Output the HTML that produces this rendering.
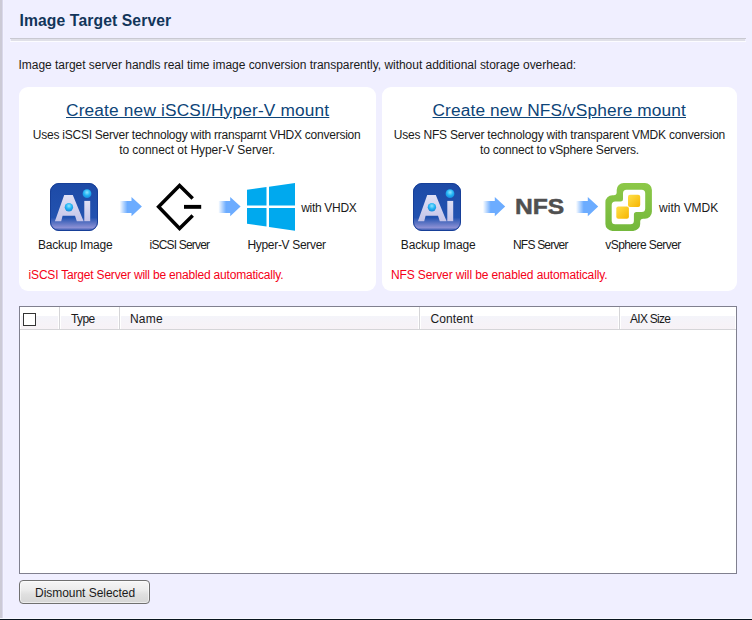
<!DOCTYPE html>
<html><head><meta charset="utf-8">
<style>
html,body{margin:0;padding:0;}
body{width:752px;height:620px;position:relative;overflow:hidden;background:#f0efff;font-family:"Liberation Sans",sans-serif;color:#1a1a1a;}
.a{position:absolute;white-space:nowrap;line-height:1;}
.t12{font-size:12px;}
#lstrip{position:absolute;left:0;top:0;width:2px;height:619px;background:#cccad6;}
#lstrip2{position:absolute;left:2px;top:0;width:1px;height:619px;background:#d9d7ea;}
#lstrip3{position:absolute;left:3px;top:0;width:1px;height:619px;background:#f3f2ff;}
#bline{position:absolute;left:0;top:619px;width:752px;height:1px;background:#08141f;}
#bline2{position:absolute;left:0;top:618px;width:752px;height:1px;background:#f8f8fe;}
#sep1{position:absolute;left:10px;top:38px;width:736px;height:1px;background:#c9c9d2;}
#sep2{position:absolute;left:11px;top:39px;width:734px;height:2px;background:#e0e0e8;}
#sep3{position:absolute;left:10px;top:41px;width:736px;height:1px;background:#fcfcff;}
.card{position:absolute;top:87px;height:204px;background:#fff;border-radius:9px;}
.link{font-size:17.3px;color:#0d4478;text-decoration:underline;}
.red{color:#f50018;}
.tbl{position:absolute;left:19px;top:306px;width:716px;height:266px;border:1px solid #80808f;background:#fff;}
.hdr{position:absolute;left:0;top:0;width:716px;height:22px;border-bottom:1px solid #d5d5d8;}
.cell{position:absolute;top:0;height:22px;}
.cell .g{position:absolute;left:1px;right:1px;top:9px;bottom:0;background:linear-gradient(#f4f4fa,#f7f2f6);}
.vs{position:absolute;top:0;width:1px;height:22px;background:#d5d5d8;}
.btn{position:absolute;left:19px;top:580px;width:129px;height:22px;border:1px solid #707070;border-radius:4px;background:linear-gradient(#f6f6f6 0%,#ececec 40%,#e0e0e0 60%,#d6d6d6 100%);box-shadow:inset 0 0 0 1px rgba(255,255,255,.55);}
</style></head><body>
<div id="lstrip"></div><div id="lstrip2"></div><div id="lstrip3"></div>
<div id="bline2"></div><div id="bline"></div>

<div class="a" style="left:19.5px;top:13.3px;font-size:15.7px;font-weight:bold;color:#12355a;letter-spacing:0.11px;">Image Target Server</div>
<div id="sep1"></div><div id="sep2"></div><div id="sep3"></div>

<div class="a t12" style="left:18.5px;top:59px;letter-spacing:-0.03px;">Image target server handls real time image conversion transparently, without additional storage overhead:</div>

<div class="card" style="left:19px;width:357px;"></div>
<div class="card" style="left:382px;width:355px;"></div>

<!-- left card -->
<div class="a link" style="left:66px;top:101.5px;letter-spacing:0.165px;">Create new iSCSI/Hyper-V mount</div>
<div class="a t12" style="left:32.8px;top:129px;letter-spacing:-0.241px;">Uses iSCSI Server technology with rransparnt VHDX conversion</div>
<div class="a t12" style="left:119.2px;top:144px;letter-spacing:-0.057px;">to connect ot Hyper-V Server.</div>
<div class="a t12" style="left:38px;top:239px;letter-spacing:-0.191px;">Backup Image</div>
<div class="a t12" style="left:149.6px;top:239px;letter-spacing:-0.809px;">iSCSI Server</div>
<div class="a t12" style="left:247.5px;top:239px;letter-spacing:-0.323px;">Hyper-V Server</div>
<div class="a t12" style="left:301.2px;top:202px;letter-spacing:-0.3px;">with VHDX</div>
<div class="a t12 red" style="left:28.6px;top:269px;letter-spacing:-0.192px;">iSCSI Target Server will be enabled automatically.</div>

<!-- right card -->
<div class="a link" style="left:432.5px;top:101.5px;letter-spacing:0.135px;">Create new NFS/vSphere mount</div>
<div class="a t12" style="left:393.8px;top:129px;letter-spacing:-0.195px;">Uses NFS Server technology with transparent VMDK conversion</div>
<div class="a t12" style="left:480px;top:144px;letter-spacing:-0.193px;">to connect to vSphere Servers.</div>
<div class="a t12" style="left:400.8px;top:239px;letter-spacing:-0.173px;">Backup Image</div>
<div class="a t12" style="left:513px;top:239px;letter-spacing:-0.8px;">NFS Server</div>
<div class="a t12" style="left:605.3px;top:239px;letter-spacing:-0.569px;">vSphere Server</div>
<div class="a t12" style="left:659.1px;top:202px;letter-spacing:-0.025px;">with VMDK</div>
<div class="a t12 red" style="left:391px;top:269px;letter-spacing:-0.115px;">NFS Server will be enabled automatically.</div>

<!-- icons -->
<svg style="position:absolute;left:0;top:0;" width="752" height="620" viewBox="0 0 752 620">
<defs>
<linearGradient id="ar" x1="0" x2="1" y1="0" y2="0"><stop offset="0" stop-color="#6cacff" stop-opacity="0"/><stop offset="0.35" stop-color="#6cacff" stop-opacity="1"/><stop offset="1" stop-color="#6cacff"/></linearGradient>
<linearGradient id="aib" x1="0" x2="0" y1="0" y2="1"><stop offset="0" stop-color="#1d4aa6"/><stop offset="0.72" stop-color="#2252b0"/><stop offset="0.93" stop-color="#8c90d4"/><stop offset="1" stop-color="#1d4aa6"/></linearGradient>
<linearGradient id="aia" x1="0" x2="0" y1="0" y2="1"><stop offset="0" stop-color="#e0e0f4"/><stop offset="1" stop-color="#c4c4e8"/></linearGradient>
<radialGradient id="dot" cx="0.5" cy="0.35" r="0.6"><stop offset="0" stop-color="#8fe4ff"/><stop offset="0.6" stop-color="#22b4f4"/><stop offset="1" stop-color="#1a90e0"/></radialGradient>
<linearGradient id="grn" gradientUnits="userSpaceOnUse" x1="0" x2="0" y1="183" y2="231"><stop offset="0" stop-color="#8cc848"/><stop offset="1" stop-color="#74b83c"/></linearGradient>
<linearGradient id="yel" x1="0" x2="1" y1="0" y2="1"><stop offset="0" stop-color="#ffe04a"/><stop offset="1" stop-color="#f6b400"/></linearGradient>
</defs>
<g transform="translate(50 183)"><rect x="0" y="0" width="48" height="48" rx="9" fill="url(#aib)"/>
<rect x="0.5" y="0.5" width="47" height="47" rx="8.5" fill="none" stroke="#173f98" stroke-width="1"/>
<path d="M4.9 38.2 L14.2 12 L22.8 12 L33.6 38.2 L26.8 38.2 L25 32.8 L12.6 32.8 L11.2 38.2 Z" fill="url(#aia)"/>
<rect x="34.3" y="17.9" width="5.9" height="20.3" fill="url(#aia)"/>
<circle cx="18.9" cy="24.2" r="4.2" fill="url(#dot)"/>
<circle cx="37" cy="10.7" r="4.4" fill="url(#dot)"/></g>
<g transform="translate(413 183)"><rect x="0" y="0" width="48" height="48" rx="9" fill="url(#aib)"/>
<rect x="0.5" y="0.5" width="47" height="47" rx="8.5" fill="none" stroke="#173f98" stroke-width="1"/>
<path d="M4.9 38.2 L14.2 12 L22.8 12 L33.6 38.2 L26.8 38.2 L25 32.8 L12.6 32.8 L11.2 38.2 Z" fill="url(#aia)"/>
<rect x="34.3" y="17.9" width="5.9" height="20.3" fill="url(#aia)"/>
<circle cx="18.9" cy="24.2" r="4.2" fill="url(#dot)"/>
<circle cx="37" cy="10.7" r="4.4" fill="url(#dot)"/></g>
<g transform="translate(119.3 197.1)"><path d="M0.3 3.9 L12.2 3.9 L12.2 0 L22.6 9.5 L12.2 19.1 L12.2 15.8 L0.3 15.8 Z" fill="url(#ar)"/></g>
<g transform="translate(218 197.1)"><path d="M0.3 3.9 L12.2 3.9 L12.2 0 L22.6 9.5 L12.2 19.1 L12.2 15.8 L0.3 15.8 Z" fill="url(#ar)"/></g>
<g transform="translate(482.6 197.1)"><path d="M0.3 3.9 L12.2 3.9 L12.2 0 L22.6 9.5 L12.2 19.1 L12.2 15.8 L0.3 15.8 Z" fill="url(#ar)"/></g>
<g transform="translate(575.6 197.1)"><path d="M0.3 3.9 L12.2 3.9 L12.2 0 L22.6 9.5 L12.2 19.1 L12.2 15.8 L0.3 15.8 Z" fill="url(#ar)"/></g>
<!-- iscsi -->
<path d="M192.7 198.6 L179.55 185.6 L158.6 206.8 L179.55 228.4 L192.7 215.4" fill="none" stroke="#000" stroke-width="3.5" stroke-linejoin="miter"/>
<rect x="184" y="204.9" width="17.2" height="3.9" fill="#000"/>
<!-- windows -->
<g fill="#00a9ee">
<path d="M247 189.8 L266.5 187.1 L266.5 205.6 L247 205.6 Z"/>
<path d="M269 186.7 L295 183 L295 205.6 L269 205.6 Z"/>
<path d="M247 208.1 L266.5 208.1 L266.5 226.4 L247 223.7 Z"/>
<path d="M269 208.1 L295 208.1 L295 230.7 L269 226.9 Z"/>
</g>
<!-- vsphere -->
<g>
<path d="M623.70 183.00 L644.90 183.00 A7 7 0 0 1 651.90 190.00 L651.90 211.70 A7 7 0 0 1 644.90 218.70 L643.20 218.70 A3 3 0 0 0 640.20 221.70 L640.20 223.90 A7 7 0 0 1 633.20 230.90 L612.40 230.90 A7 7 0 0 1 605.40 223.90 L605.40 202.30 A7 7 0 0 1 612.40 195.30 L613.70 195.30 A3 3 0 0 0 616.70 192.30 L616.70 190.00 A7 7 0 0 1 623.70 183.00 Z" fill="url(#grn)"/>
<path d="M626.50 189.80 L641.70 189.80 A3.5 3.5 0 0 1 645.20 193.30 L645.20 208.50 A3.5 3.5 0 0 1 641.70 212.00 L636.40 212.00 A2.5 2.5 0 0 0 633.90 214.50 L633.90 220.70 A3.5 3.5 0 0 1 630.40 224.20 L615.20 224.20 A3.5 3.5 0 0 1 611.70 220.70 L611.70 205.10 A3.5 3.5 0 0 1 615.20 201.60 L620.50 201.60 A2.5 2.5 0 0 0 623.00 199.10 L623.00 193.30 A3.5 3.5 0 0 1 626.50 189.80 Z" fill="#fff"/>
<rect x="628" y="194.8" width="12.2" height="12.2" rx="2" fill="url(#yel)"/>
<rect x="616.3" y="206.6" width="12.6" height="12.1" rx="2" fill="url(#yel)"/>
</g>
</svg>
<div class="a" style="left:515px;top:196px;font-size:22px;font-weight:bold;color:#505050;transform:scaleX(1.12);transform-origin:0 0;-webkit-text-stroke:0.5px #505050;">NFS</div>

<!-- table -->
<div class="tbl">
 <div class="hdr">
  <div class="cell" style="left:0;width:39px;"><div class="g"></div></div>
  <div class="vs" style="left:39px;"></div>
  <div class="cell" style="left:40px;width:59px;"><div class="g"></div></div>
  <div class="vs" style="left:99px;"></div>
  <div class="cell" style="left:100px;width:299px;"><div class="g"></div></div>
  <div class="vs" style="left:399px;"></div>
  <div class="cell" style="left:400px;width:199px;"><div class="g"></div></div>
  <div class="vs" style="left:599px;"></div>
  <div class="cell" style="left:600px;width:116px;"><div class="g"></div></div>
  <div style="position:absolute;left:3px;top:6px;width:11px;height:11px;border:1px solid #333;background:#fff;"></div>
  <div class="a t12" style="left:51px;top:6px;letter-spacing:-0.6px;">Type</div>
  <div class="a t12" style="left:110px;top:6px;letter-spacing:0.2px;">Name</div>
  <div class="a t12" style="left:410.4px;top:6px;letter-spacing:0.117px;">Content</div>
  <div class="a t12" style="left:610px;top:6px;letter-spacing:-0.714px;">AIX Size</div>
 </div>
</div>

<div class="btn"></div>
<div class="a t12" style="left:35px;top:587px;letter-spacing:-0.037px;">Dismount Selected</div>
</body></html>
